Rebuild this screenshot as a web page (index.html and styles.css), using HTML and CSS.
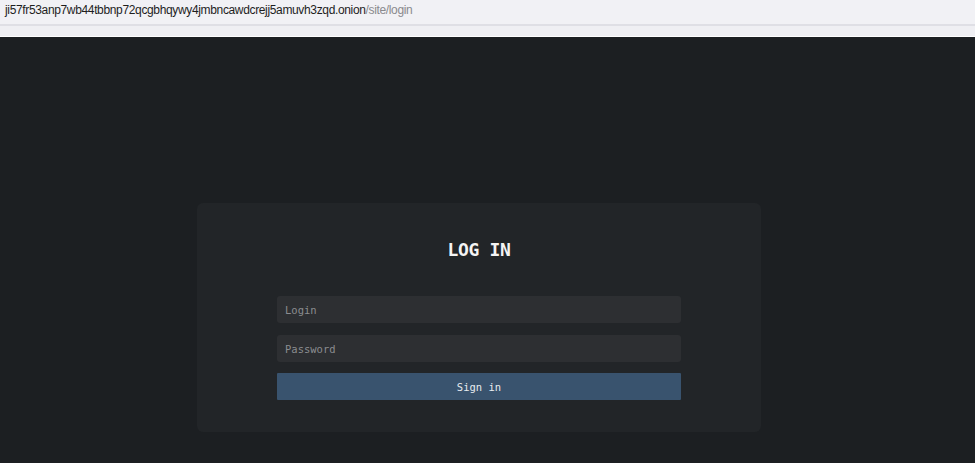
FILE: index.html
```html
<!DOCTYPE html>
<html>
<head>
<meta charset="utf-8">
<link rel="stylesheet" href="styles.css">
</head>
<body>
<div class="browser">
  <div class="urlbar"><span class="host">ji57fr53anp7wb44tbbnp72qcgbhqywy4jmbncawdcrejj5amuvh3zqd.onion</span><span class="path">/site/login</span></div>
  <div class="divider"></div>
  <div class="band"></div>
</div>
<main class="page">
  <div class="card">
    <h1 class="title">LOG IN</h1>
    <form class="form">
      <input class="field" type="text" placeholder="Login">
      <input class="field" type="password" placeholder="Password">
      <button class="btn" type="button">Sign in</button>
    </form>
  </div>
</main>
</body>
</html>
```
FILE: styles.css
```css
html, body {
  margin: 0;
  padding: 0;
  height: 100%;
}
body {
  background: #1c1f22;
  display: flex;
  flex-direction: column;
  overflow: hidden;
}
.browser {
  background: #f1f1f5;
}
.urlbar {
  height: 24px;
  padding-left: 5px;
  font-family: "Liberation Sans", Arial, sans-serif;
  font-size: 12px;
  line-height: 21px;
  letter-spacing: -0.35px;
  color: #1e1e1e;
  white-space: nowrap;
}
.path {
  color: #8a8a8e;
}
.divider {
  height: 2px;
  background: #dfdfe5;
}
.band {
  height: 10px;
  background: #efeff3;
  border-bottom: 1px solid #ffffff;
}
.page {
  flex: 1;
  display: flex;
  justify-content: center;
  align-items: flex-start;
  padding: 166px 17px 0 0;
}
.card {
  width: 564px;
  height: 229px;
  box-sizing: border-box;
  background: #222528;
  border-radius: 6px;
  padding: 36px 80px 0;
  display: flex;
  flex-direction: column;
}
.title {
  margin: 0 0 35px;
  text-align: center;
  font-family: "DejaVu Sans Mono", "Liberation Mono", monospace;
  font-weight: bold;
  font-size: 18px;
  line-height: 22px;
  letter-spacing: -0.3px;
  color: #f4f4f4;
}
.form {
  display: flex;
  flex-direction: column;
  gap: 12px;
}
.field {
  height: 27px;
  box-sizing: border-box;
  border: none;
  border-radius: 3px;
  background: #2d2f32;
  padding: 0 8px;
  font-family: "DejaVu Sans Mono", "Liberation Mono", monospace;
  font-size: 10.5px;
  color: #ddd;
  outline: none;
}
.field::placeholder {
  color: #8b8d90;
}
.field + .field + .btn {
  margin-top: -1px;
}
.btn {
  height: 27px;
  border: none;
  border-radius: 1px;
  background: #39536e;
  color: #e8ecf0;
  font-family: "DejaVu Sans Mono", "Liberation Mono", monospace;
  font-size: 10.5px;
  padding: 0;
}
```
